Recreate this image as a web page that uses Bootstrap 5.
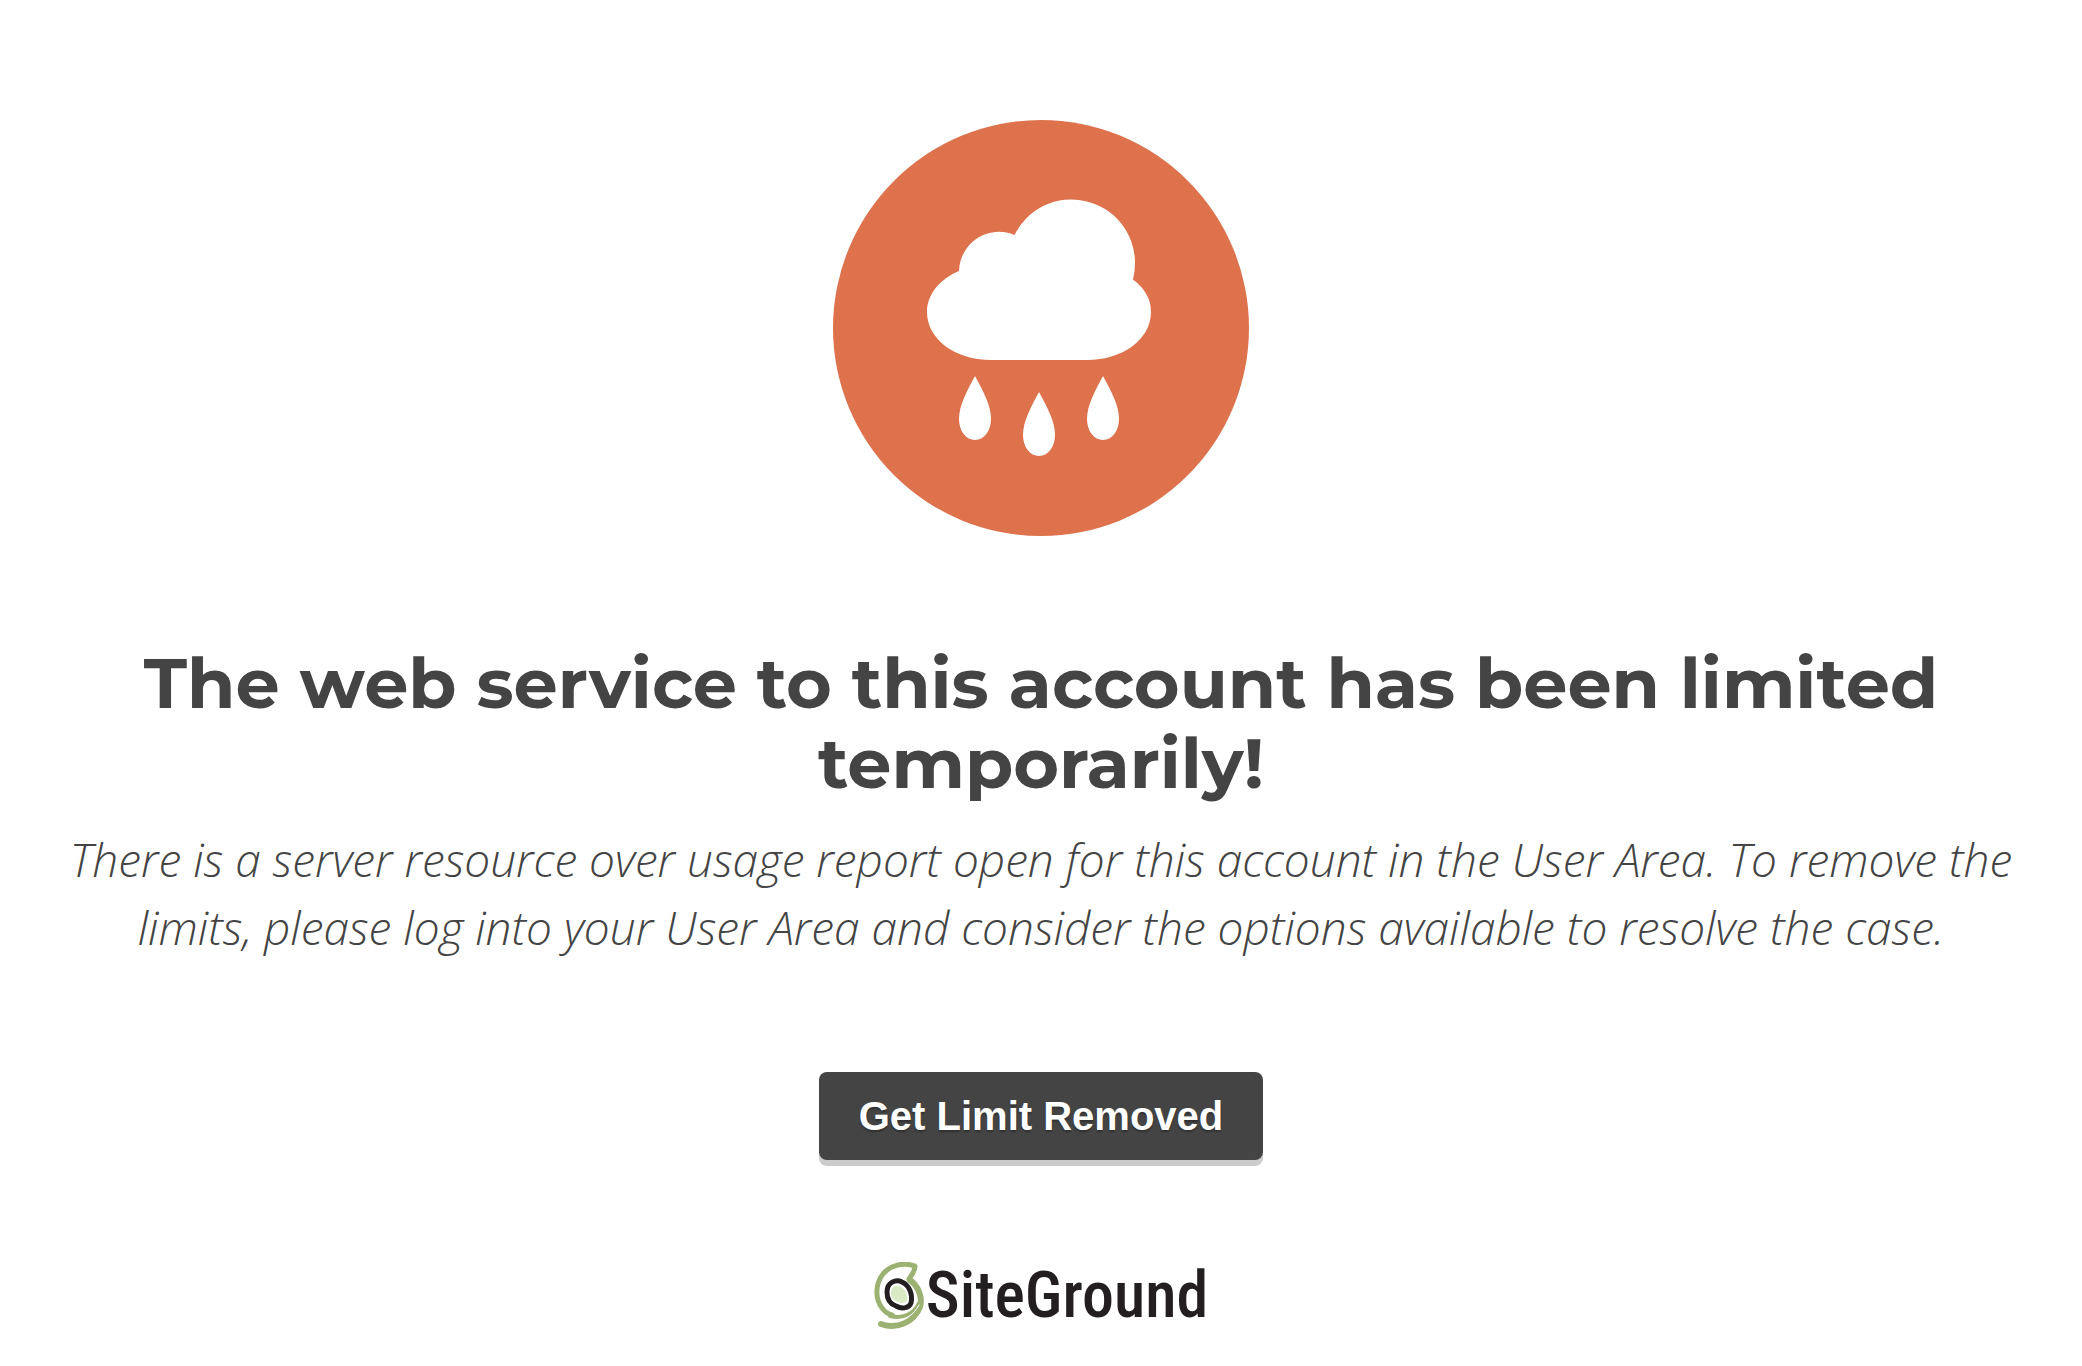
<!DOCTYPE html>
<html lang="en">
<head>
<meta charset="utf-8">
<meta name="viewport" content="width=device-width, initial-scale=1">
<title>Account limited</title>
<link rel="stylesheet" href="https://cdn.jsdelivr.net/npm/bootstrap@5.3.0/dist/css/bootstrap.min.css">
<style>
  body { color: #444; background: #fff; font-family: "Open Sans", sans-serif; }
  .notice { padding: 120px 60px 32px; }
  .notice-icon { width: 416px; max-width: 100%; height: auto; }
  .notice-title { margin: 107px 0 0; font: 700 70px/80px Montserrat, Inter, sans-serif; }
  .notice-text { margin: 22px 0 0; font-size: 46px; line-height: 68px; font-style: italic; font-weight: 300; }
  .btn-limit { margin-top: 111px; padding: 14px 40px; border: 0; border-radius: 8px; background: #444; color: #fff;
    font: 700 40px/60px "Liberation Sans", Arial, sans-serif; box-shadow: 0 6px 0 #ccc; text-shadow: 0 2px 2px rgba(0,0,0,.3); }
  .btn-limit:hover { background: #333; color: #fff; }
  .brand-link { margin-top: 98px; height: 76px; gap: 2px; color: #231f20; }
  .brand-name { font: 500 64px/76px "Roboto Condensed", Lato, sans-serif; }
</style>
<script src="https://cdn.jsdelivr.net/npm/bootstrap@5.3.0/dist/js/bootstrap.bundle.min.js"></script>
</head>
<body>
<main class="notice container-fluid d-flex flex-column align-items-center text-center">
  <svg class="notice-icon" viewBox="0 0 416 416" aria-hidden="true">
    <circle cx="208" cy="208" r="208" fill="#dd724d"/>
    <g fill="#fff">
      <path d="M126 151A40 40 0 0 1 181.500 115A63.500 63.500 0 0 1 302 143Q302 151 300 159.500Q318 173 318 192C318 219 290 240 254 240H158C122 240 94 219 94 192C94 174 107 159 126 151Z"/>
      <path id="drop" d="M142 256C150 271 158 285 158 299C158 311 151 320 142 320S126 311 126 299C126 285 134 271 142 256Z"/>
      <use href="#drop" x="64" y="16"/>
      <use href="#drop" x="128"/>
    </g>
  </svg>
  <h1 class="notice-title">The web service to this account has been limited temporarily!</h1>
  <p class="notice-text">There is a server resource over usage report open for this account in the User Area. To remove the limits, please log into your User Area and consider the options available to resolve the case.</p>
  <button type="button" class="btn btn-limit">Get Limit Removed</button>
  <a href="#" class="brand-link d-flex align-items-center text-decoration-none">
    <svg width="50" height="68" viewBox="0 0 50 68" aria-hidden="true">
      <g fill="none" stroke-linecap="round" stroke-linejoin="round">
        <path d="M35 17C38 13 41 9 41 4C30 0 16 3 9 12C1 22 1 37 8 46C11 50 14 52 18 53" stroke="#9bb272" stroke-width="5"/>
        <path d="M36 18C44 24 49 35 46 45C40 60 23 68 7 62" stroke="#9bb272" stroke-width="6"/>
        <path d="M45 41C40 52 29 57 16 54" stroke="#9bb272" stroke-width="4"/>
        <path d="M45 43C40 53 31 58 22 59" stroke="#fff" stroke-width="1"/>
        <path d="M13 30C13 20 22 17 28 20C35 23 39 32 37 41C35 47 27 47 22 44C16 42 13 37 13 30Z" fill="#fff" stroke="#231f20" stroke-width="5"/>
        <path d="M17 31C17 25 22 22 27 25C32 28 34 33 33 39C30 42 25 41 22 39C18 37 17 34 17 31Z" fill="#d9eac4"/>
      </g>
    </svg>
    <span class="brand-name">SiteGround</span>
  </a>
</main>
</body>
</html>
